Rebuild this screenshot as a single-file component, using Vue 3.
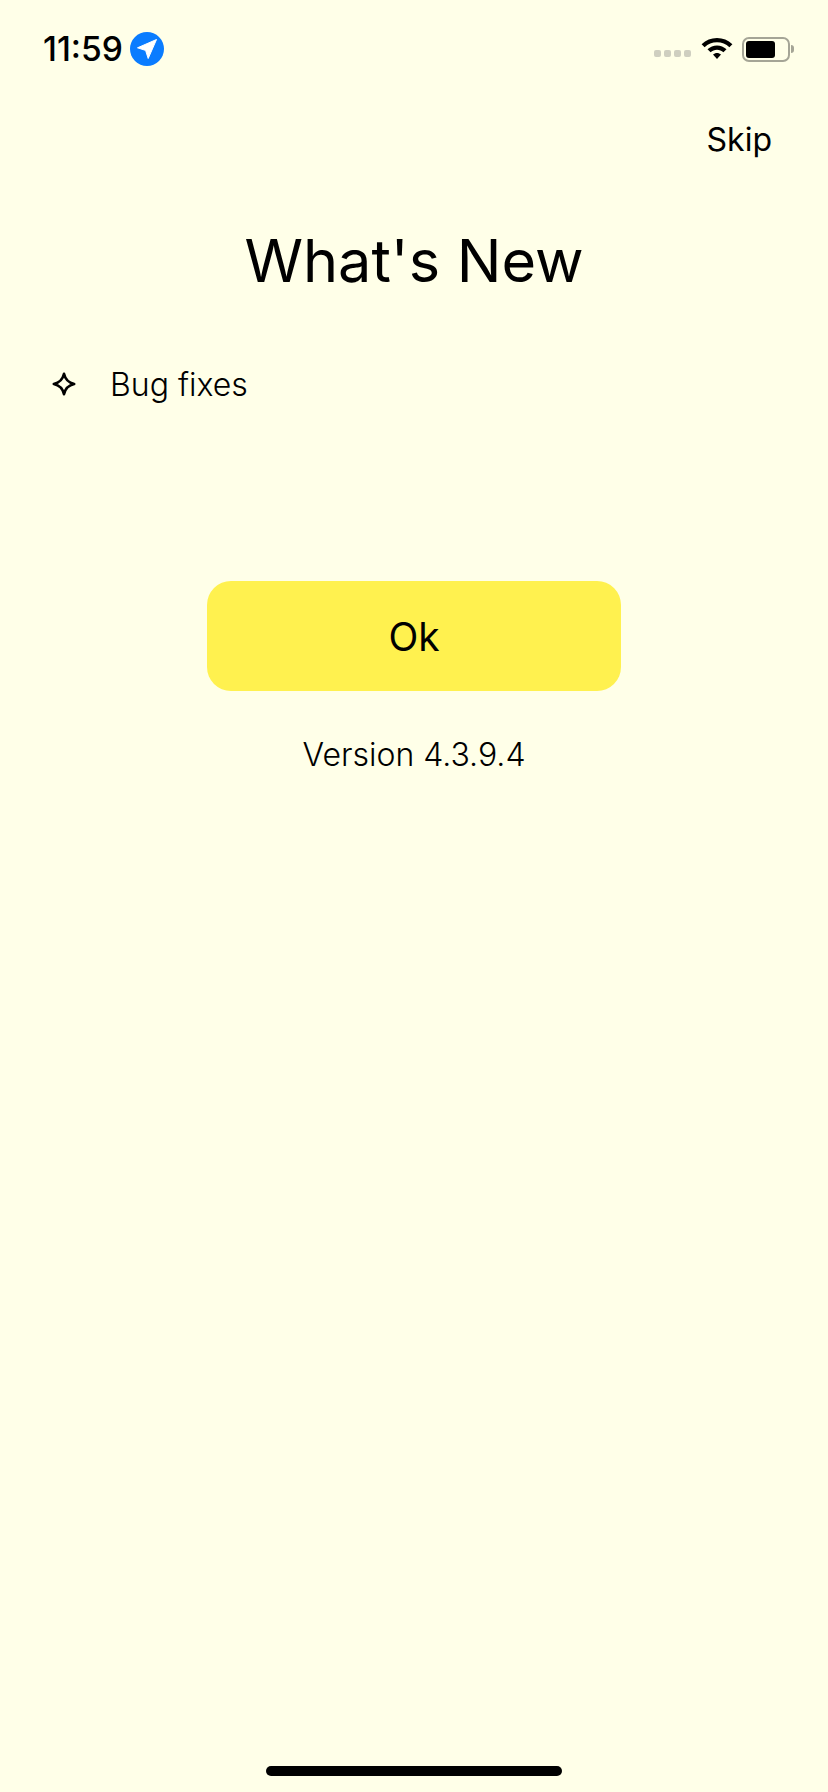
<script setup>
const title = "What's New"
</script>

<template>
  <div class="screen">
    <header class="status">
      <div class="status-left">
        <span class="time">11:59</span>
        <svg class="loc" viewBox="0 0 34 34" width="34" height="34">
          <circle cx="17" cy="17" r="17" fill="#0a7cff" />
          <path d="M26.5 7.5 L7.5 15.8 L15.6 18.4 L18.2 26.5 Z" fill="#fff" stroke="#fff" stroke-width="1" stroke-linejoin="round" />
        </svg>
      </div>
      <div class="status-right">
        <div class="signal"><i></i><i></i><i></i><i></i></div>
        <svg class="wifi" viewBox="0 0 32 24" width="32" height="24">
          <path d="M16 2C10 2 5 4.2 0.6 8.2L3.6 11.3C7 8.1 11.2 6.3 16 6.3S25 8.1 28.4 11.3L31.4 8.2C27 4.2 22 2 16 2Z" fill="#000" />
          <path d="M16 9.4C12.4 9.4 9.2 10.7 6.5 13.2L9.6 16.3C11.4 14.7 13.6 13.8 16 13.8S20.6 14.7 22.4 16.3L25.5 13.2C22.8 10.7 19.6 9.4 16 9.4Z" fill="#000" />
          <path d="M16 17C14.5 17 13.2 17.5 12 18.6L16 23L20 18.6C18.8 17.5 17.500 17 16 17Z" fill="#000" />
        </svg>
        <div class="battery">
          <div class="battery-body"><div class="battery-fill"></div></div>
          <div class="battery-cap"></div>
        </div>
      </div>
    </header>

    <div class="skip-row"><span class="skip">Skip</span></div>

    <h1 class="title">{{ title }}</h1>

    <ul class="features">
      <li class="feature">
        <svg class="sparkle" viewBox="0 0 24 24" width="24" height="24">
          <path d="M12 1.800C13.300 7.800 16.200 10.700 22.200 12C16.200 13.300 13.300 16.200 12 22.200C10.700 16.200 7.800 13.300 1.800 12C7.800 10.700 10.700 7.800 12 1.800Z" fill="none" stroke="#000" stroke-width="2.600" stroke-linejoin="round" />
        </svg>
        <span>Bug fixes</span>
      </li>
    </ul>

    <button class="ok" type="button">Ok</button>
    <p class="version">Version 4.3.9.4</p>

    <div class="home-bar"></div>
  </div>
</template>

<style scoped>
.screen {
  position: relative;
  width: 828px;
  height: 1792px;
  background: #ffffe8;
  color: #000;
  font-family: Inter, "Liberation Sans", sans-serif;
  display: flex;
  flex-direction: column;
  overflow: hidden;
}
.status {
  height: 98px;
  padding: 0 34px 0 43px;
  box-sizing: border-box;
  display: flex;
  align-items: center;
  justify-content: space-between;
}
.status-left {
  display: flex;
  align-items: center;
  gap: 7px;
}
.time {
  font-size: 33.6px;
  font-weight: 550;
  line-height: 40px;
}
.status-right {
  display: flex;
  align-items: center;
}
.signal {
  display: flex;
  gap: 3px;
  margin-top: 8px;
  margin-right: 10px;
}
.signal i {
  width: 7px;
  height: 7px;
  border-radius: 2px;
  background: #cfcfc0;
}
.wifi {
  margin-right: 9px;
  margin-top: -2px;
}
.battery {
  display: flex;
  align-items: center;
}
.battery-body {
  width: 48px;
  height: 25px;
  box-sizing: border-box;
  border: 2px solid #a5a596;
  border-radius: 7px;
  padding: 2px;
}
.battery-fill {
  width: 29px;
  height: 100%;
  background: #000;
  border-radius: 3px;
}
.battery-cap {
  width: 3px;
  height: 8px;
  margin-left: 1px;
  background: #a5a596;
  border-radius: 0 3px 3px 0;
}
.skip-row {
  display: flex;
  justify-content: flex-end;
  padding-right: 56px;
  height: 44px;
  margin-top: 19px;
  align-items: center;
}
.skip {
  font-size: 32px;
  font-weight: 400;
}
.title {
  margin: 63px 0 0;
  text-align: center;
  font-size: 59.4px;
  line-height: 72px;
  font-weight: 400;
  letter-spacing: 0;
}
.features {
  list-style: none;
  margin: 66px 0 0;
  padding: 0 0 0 52px;
}
.feature {
  display: flex;
  align-items: center;
  gap: 34px;
  height: 44px;
  font-size: 32px;
  font-weight: 280;
}
.sparkle {
  flex: none;
}
.ok {
  display: block;
  align-self: center;
  width: 414px;
  height: 110px;
  margin-top: 175px;
  border: 0;
  border-radius: 24px;
  background: #fff14f;
  color: #000;
  font-family: inherit;
  font-size: 39px;
  font-weight: 400;
  padding: 0;
}
.version {
  margin: 44px 0 0;
  text-align: center;
  font-size: 32px;
  line-height: 40px;
  font-weight: 280;
}
.home-bar {
  position: absolute;
  left: 266px;
  bottom: 16px;
  width: 296px;
  height: 10px;
  border-radius: 5px;
  background: #000;
}
</style>
